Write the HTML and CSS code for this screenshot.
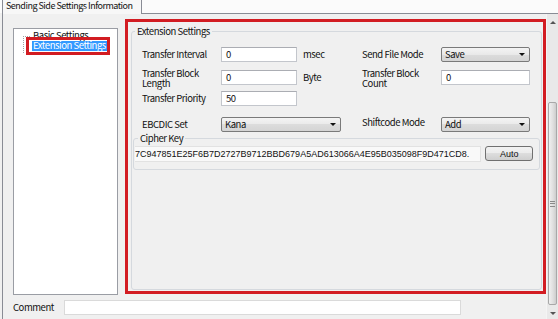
FILE: index.html
```html
<!DOCTYPE html>
<html lang="en">
<head>
  <meta charset="UTF-8">
  <title>Sending Side Settings Information</title>
  <link rel="stylesheet" href="styles.css">
</head>
<body>

<div class="tabstrip">
  <div class="tab">Sending Side Settings Information</div>
</div>

<div class="page">
  <div class="page-content">
    <div class="split">

      <div class="tree">
        <div class="tree-line vline"></div>
        <div class="tree-line hline"></div>
        <div class="node">Basic Settings</div>
        <div class="node selected">Extension Settings</div>
        <div class="mark"></div>
      </div>

      <div class="detail">
        <fieldset class="group ext">
          <legend>Extension Settings</legend>

          <div class="row r1">
            <div class="lbl">Transfer Interval</div>
            <div class="cell"><div class="txt">0</div></div>
            <div class="unit">msec</div>
            <div class="lbl">Send File Mode</div>
            <div class="combo">Save</div>
          </div>

          <div class="row r2">
            <div class="lbl two">Transfer Block<br>Length</div>
            <div class="cell"><div class="txt">0</div></div>
            <div class="unit">Byte</div>
            <div class="lbl two">Transfer Block<br>Count</div>
            <div class="txt wide">0</div>
          </div>

          <div class="row r3">
            <div class="lbl">Transfer Priority</div>
            <div class="cell"><div class="txt">50</div></div>
          </div>

          <div class="row r4">
            <div class="lbl">EBCDIC Set</div>
            <div class="combo long">Kana</div>
            <div class="lbl up">Shiftcode Mode</div>
            <div class="combo">Add</div>
          </div>

          <fieldset class="group cipher">
            <legend>Cipher Key</legend>
            <div class="cipher-row">
              <div class="key">7C947851E25F6B7D2727B9712BBD679A5AD613066A4E95B035098F9D471CD8.</div>
              <button class="btn">Auto</button>
            </div>
          </fieldset>
        </fieldset>
      </div>

    </div>

    <div class="comment-row">
      <div class="comment-lbl">Comment</div>
      <div class="txt comment"></div>
    </div>
  </div>

  <div class="vscroll">
    <div class="arrow up"></div>
    <div class="track">
      <div class="thumb"><span class="grip"></span></div>
    </div>
    <div class="arrow down"></div>
  </div>
</div>

</body>
</html>
```

FILE: styles.css
```css
:root {
  --bg-color: #f0f0f0;
  --frame-color: #898c95;
  --field-border: #c3c6cc;
  --group-color: #d5d9de;
  --mark-color: #d21c22;
  --select-color: #3399ff;
  --ui-font: "Noto Sans CJK JP", "Noto Sans", sans-serif;
  --key-font: "Liberation Sans", Arial, sans-serif;
}

html, body {
  margin: 0;
  width: 558px;
  height: 319px;
  overflow: hidden;
}

body {
  background-color: var(--bg-color);
  color: #111;
  font-family: var(--ui-font);
  font-size: 9.5px;
  letter-spacing: -0.45px;
  line-height: 11px;
}

/* tab header */

.tabstrip {
  height: 13px;
  padding-left: 2px;
  background-color: #fbfbfb;
  display: flex;
  align-items: flex-end;
}

.tab {
  width: 135px;
  height: 14px;
  padding-left: 3px;
  margin-bottom: -1px;
  border: 1px solid var(--frame-color);
  border-top: none;
  border-bottom: none;
  background-color: #f7f7f7;
  line-height: 12px;
  font-size: 9px;
  letter-spacing: -0.5px;
  position: relative;
  z-index: 1;
  white-space: nowrap;
}

.page {
  display: flex;
  height: 305px;
  margin-left: 2px;
  border-top: 1px solid var(--frame-color);
  border-left: 1px solid var(--frame-color);
}

.page-content {
  width: 543px;
  padding-top: 5px;
}

.split {
  display: flex;
  align-items: flex-start;
  gap: 7px;
  padding-left: 10px;
}

/* tree */

.tree {
  position: relative;
  width: 105px;
  height: 267px;
  margin-top: 9px;
  box-sizing: border-box;
  border: 1px solid #9a9da4;
  background-color: #fff;
  padding-top: 1px;
}

.node {
  margin-left: 18px;
  padding: 0 1px;
  height: 10px;
  line-height: 10px;
  white-space: nowrap;
}

.node.selected {
  display: inline-block;
  margin-top: 1px;
  height: 10px;
  line-height: 9px;
  background-color: var(--select-color);
  color: #fff;
}

.tree-line {
  position: absolute;
  border-color: #a0a0a0;
  border-style: dotted;
  border-width: 0;
}

.vline {
  left: 9px;
  top: 7px;
  height: 17px;
  border-left-width: 1px;
}

.hline {
  left: 9px;
  top: 7px;
  width: 7px;
  border-top-width: 1px;
}

.mark {
  position: absolute;
  left: 12px;
  top: 8px;
  width: 84px;
  height: 18px;
  box-sizing: border-box;
  border: 3px solid var(--mark-color);
}

/* right panel */

.detail {
  width: 421px;
  height: 275px;
  box-sizing: border-box;
  border: 3px solid var(--mark-color);
  display: flex;
  flex-direction: column;
}

.group {
  margin: 0;
  padding: 0;
  border: 1px solid var(--group-color);
  border-radius: 3px;
  min-width: 0;
}

.group legend {
  padding: 0 2px;
  margin-left: 3px;
  line-height: 11px;
}

.ext {
  flex: 1;
  margin: 4px 1px 1px 3px;
  padding-top: 10px;
}

.row {
  display: flex;
  align-items: center;
  padding-left: 10px;
  height: 15px;
}

.r2 {
  margin-top: 6px;
  height: 21px;
  align-items: flex-start;
}

.r2 .cell,
.r2 .unit,
.r2 .wide {
  margin-top: 2px;
}

.lbl.two {
  line-height: 10px;
}

.r3 {
  margin-top: 2px;
}

.r4 {
  margin-top: 11px;
}

.lbl {
  width: 79px;
  white-space: nowrap;
}

.lbl.up {
  margin-top: -4px;
}

.cell {
  width: 82px;
}

.unit {
  width: 59px;
  line-height: 15px;
}

.txt {
  width: 76px;
  height: 15px;
  box-sizing: border-box;
  border: 1px solid var(--field-border);
  border-top-color: #abadb3;
  background-color: #fff;
  padding-left: 4px;
  line-height: 12px;
}

.txt.wide {
  width: 89px;
}

.combo {
  position: relative;
  width: 89px;
  height: 15px;
  box-sizing: border-box;
  border: 1px solid #7a7a7a;
  border-radius: 2px;
  background: linear-gradient(#f4f4f4, #e9e9e9 50%, #dcdcdc 50%, #d4d4d4);
  padding-left: 3px;
  line-height: 12px;
}

.combo::after {
  content: "";
  position: absolute;
  right: 4px;
  top: 5px;
  border-left: 3px solid transparent;
  border-right: 3px solid transparent;
  border-top: 3px solid #111;
}

.combo.long {
  width: 120px;
  margin-right: 21px;
}

.cipher {
  margin: 1px 1px 0 1px;
  padding: 2px 6px 7px 1px;
}

.cipher-row {
  display: flex;
  align-items: flex-start;
  gap: 2px;
}

.key {
  width: 349px;
  height: 16px;
  box-sizing: border-box;
  border: 1px solid #e2e2e2;
  border-left: none;
  background-color: #f9f9f9;
  overflow: hidden;
  white-space: nowrap;
  font-family: var(--key-font);
  font-size: 9px;
  letter-spacing: 0;
  line-height: 15px;
}

.btn {
  width: 48px;
  height: 15px;
  margin: 0 0 0 2px;
  padding: 0;
  border: 1px solid #707070;
  border-radius: 3px;
  background: linear-gradient(#f2f2f2, #ebebeb 50%, #dddddd 50%, #cfcfcf);
  font-family: var(--key-font);
  font-size: 9px;
  color: #111;
  line-height: 12px;
}

/* comment */

.comment-row {
  display: flex;
  align-items: center;
  margin-top: 5px;
  padding-left: 10px;
  height: 15px;
}

.comment-lbl {
  width: 51px;
}

.txt.comment {
  width: 397px;
  border-color: #dadada;
}

/* scrollbar */

.vscroll {
  width: 12px;
  display: flex;
  flex-direction: column;
  background-color: #e9e9e9;
  border-left: 1px solid #f4f4f4;
}

.arrow {
  height: 16px;
  position: relative;
}

.arrow::after {
  content: "";
  position: absolute;
  left: 3px;
  border-left: 3px solid transparent;
  border-right: 3px solid transparent;
}

.arrow.up::after {
  top: 7px;
  border-bottom: 3px solid #555;
}

.arrow.down {
  height: 13px;
}

.arrow.down::after {
  top: 6px;
  border-top: 3px solid #555;
}

.track {
  flex: 1;
  padding-top: 72px;
}

.thumb {
  height: 203px;
  margin: 0 1px;
  box-sizing: border-box;
  border: 1px solid #a8a8a8;
  border-radius: 2px;
  background: linear-gradient(90deg, #f0f0f0, #dedede 60%, #cdcdcd);
  display: flex;
  align-items: center;
  justify-content: center;
}

.grip {
  width: 5px;
  height: 4px;
  border-top: 1px solid #8a8a8a;
  border-bottom: 1px solid #8a8a8a;
  position: relative;
}

.grip::after {
  content: "";
  position: absolute;
  left: 0;
  right: 0;
  top: 1px;
  border-top: 1px solid #8a8a8a;
}
```
